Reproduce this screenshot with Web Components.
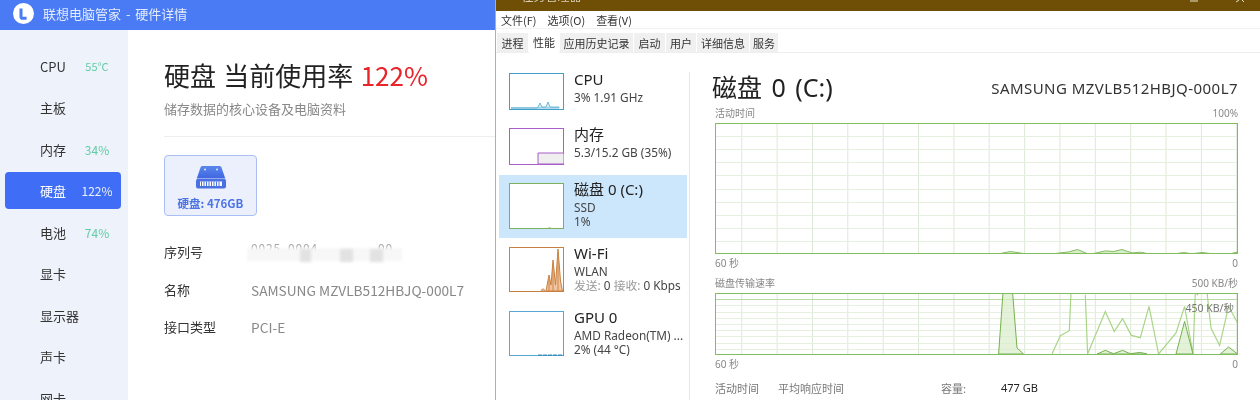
<!DOCTYPE html>
<html lang="zh-CN"><head><meta charset="utf-8"><title>硬件详情</title>
<style>
html,body{margin:0;height:400px;width:1260px;overflow:hidden;background:#fff}
body{font-family:"Noto Sans CJK SC","Noto Sans",sans-serif}
</style></head><body>
<x-desktop>
  <x-lenovo-window>
    <x-nav-item label="CPU" value="55°C"></x-nav-item>
    <x-nav-item label="主板"></x-nav-item>
    <x-nav-item label="内存" value="34%"></x-nav-item>
    <x-nav-item label="硬盘" value="122%" active></x-nav-item>
    <x-nav-item label="电池" value="74%"></x-nav-item>
    <x-nav-item label="显卡"></x-nav-item>
    <x-nav-item label="显示器"></x-nav-item>
    <x-nav-item label="声卡"></x-nav-item>
    <x-nav-item label="网卡"></x-nav-item>
  </x-lenovo-window>
  <x-taskmgr></x-taskmgr>
</x-desktop>
<script>
const def=(n,html,init)=>customElements.define(n,class extends HTMLElement{
  connectedCallback(){ if(this.shadowRoot)return; const r=this.attachShadow({mode:'open'});
    r.innerHTML=typeof html==='function'?html(this):html; init&&init(this,r);} });
const a=(e,k,d='')=>e.getAttribute(k)??d;

def('x-desktop',`<style>:host{display:flex;width:1260px;height:400px;overflow:hidden;filter:blur(.3px)}</style><slot></slot>`);

def('x-lenovo-window',`<style>
:host{display:flex;flex-direction:column;width:495px;height:400px;flex:none;overflow:hidden;background:#fff}
.bar{height:30px;flex:none;background:#4a7bf5;display:flex;align-items:center;color:#e3ebfd;font-size:13px;word-spacing:2px;padding-left:13px;gap:9px;box-sizing:border-box;padding-bottom:4px}
.bar svg{flex:none}
.body{flex:1;display:flex;min-height:0}
.side{width:128px;flex:none;background:#eef2fa;padding:17.5px 7px 0 5px;box-sizing:border-box;display:flex;flex-direction:column;gap:4.5px;overflow:hidden}
.main{flex:1;padding:27px 0 0 36px;min-width:0}
</style>
<div class="bar"><svg width="21" height="21" viewBox="0 0 21 21"><circle cx="10.5" cy="10.5" r="10.5" fill="#fff"/><path d="M8 5.5v8.2q0 1.6 1.6 1.6h4" fill="none" stroke="#4a7bf5" stroke-width="3"/></svg><span>联想电脑管家 - 硬件详情</span></div>
<div class="body"><div class="side"><slot></slot></div><div class="main"><x-disk-detail></x-disk-detail></div></div>`);

def('x-nav-item',e=>`<style>
:host{display:flex;flex:none;height:37px;align-items:center;border-radius:4px;position:relative;font-size:13px;color:#333;${e.hasAttribute('active')?'background:#3f6df5;color:#fff;':''}}
.l{margin-left:35px;width:39px;white-space:nowrap}
.v{width:38px;text-align:center;font-size:${a(e,'value').includes('°')?11:12}px;color:${e.hasAttribute('active')?'#eaf0ff':'#62cda6'};margin-left:-1px;white-space:nowrap}
</style><span class="l">${a(e,'label')}</span><span class="v">${a(e,'value')}</span>`);

def('x-disk-detail',`<style>
:host{display:block}
h1{margin:0;font-weight:400;font-size:26px;line-height:36px;color:#222;white-space:nowrap;word-spacing:1.5px}
h1 b{font-weight:400;color:#e8232a}
p{margin:7px 0 0;font-size:13px;line-height:18px;color:#888}
hr{border:0;border-top:1px solid #eee;margin:18px 0 18px}
.rows{margin-top:25px;display:flex;flex-direction:column;gap:15.5px}
</style>
<h1>硬盘 当前使用率 <b>122%</b></h1><p>储存数据的核心设备及电脑资料</p><hr>
<x-hw-card></x-hw-card>
<div class="rows">
<x-spec-row label="序列号" blur></x-spec-row>
<x-spec-row label="名称" value="SAMSUNG MZVLB512HBJQ-000L7"></x-spec-row>
<x-spec-row label="接口类型" value="PCI-E"></x-spec-row>
</div>`);

def('x-hw-card',`<style>
:host{display:flex;flex-direction:column;align-items:center;box-sizing:border-box;width:93px;height:61px;background:#ebf0fc;border:1px solid #a9bff6;border-radius:4px;color:#4d74e6;font-size:11.5px;font-weight:700;padding-top:10px}
svg{display:block;margin-bottom:5px}
span{line-height:18px;white-space:nowrap}
</style>
<svg width="30" height="23" viewBox="0 0 30 23"><defs><linearGradient id="g" x1="0" y1="0" x2="0" y2="1"><stop offset="0" stop-color="#5b86ee"/><stop offset="1" stop-color="#3f66e0"/></linearGradient></defs>
<path d="M6.5 0h17q1.2 0 1.8 1l4 11.5H.7L4.7 1q.6-1 1.8-1z" fill="url(#g)"/><circle cx="9" cy="3.6" r="1" fill="#dfe7fb"/><circle cx="21" cy="3.6" r="1" fill="#dfe7fb"/>
<path d="M1.5 13h27q1.5 0 1.5 1.5v6q0 2-2 2H2q-2 0-2-2v-6Q0 13 1.5 13z" fill="#4a70e2"/>
<path d="M4 15.5h22v4.5H4z" fill="#fff"/><path d="M5.5 15.5v4.5M8 15.5v4.5M10.5 15.5v4.5M13 15.5v4.5M15.5 15.5v4.5M18 15.5v4.5M20.5 15.5v4.5M23 15.5v4.5" stroke="#4a70e2" stroke-width="1"/></svg>
<span>硬盘: 476GB</span>`);

def('x-spec-row',e=>`<style>
:host{display:flex;font-size:13px;line-height:22px;height:22px;color:#333;white-space:nowrap}
.l{width:87px;flex:none}.v{color:#888;font-size:13.7px}
.s{position:relative;width:150px;height:22px;color:#aaa;font-size:12px;line-height:14px;letter-spacing:.8px}
.s span{position:absolute;top:0}
.s u{position:absolute;top:7px;left:-4px;width:155px;height:13px;background:#f7f7f7;filter:blur(1.5px)}
.s i{position:absolute;top:8px;height:13px;background:#e2e2e2;filter:blur(1.5px)}
</style><span class="l">${a(e,'label')}</span>${e.hasAttribute('blur')?`<span class="s"><span style="left:0">0025</span><span style="left:37px">0004</span><span style="left:127px">00.</span><u></u><i style="left:49px;width:11px"></i><i style="left:89px;width:13px"></i><i style="left:119px;width:13px"></i></span>`:`<span class="v">${a(e,'value')}</span>`}`);

def('x-taskmgr',`<style>
:host{display:flex;flex-direction:column;width:765px;height:400px;flex:none;overflow:hidden;background:#fff;box-sizing:border-box;border-left:1.5px solid #b8b096;font-family:"Noto Sans","Noto Sans CJK SC",sans-serif;color:#222}
.title{height:11px;flex:none;background:#6f4e06;overflow:hidden;position:relative;color:#d9cfb8;font-size:12px;display:flex;margin-left:-1.5px}
.title .in{margin-top:-11px;margin-left:27px;line-height:16px;white-space:nowrap}
.title svg{position:absolute;right:0;top:0}
.menu{height:17px;flex:none;display:flex;gap:11px;padding-left:5px;font-size:11px;line-height:18px;color:#333;font-family:"Noto Sans CJK SC",sans-serif;border-bottom:1px solid #f1f1f1;white-space:nowrap}
.body{flex:1;display:flex;min-height:0}
.list{width:194px;flex:none;box-sizing:border-box;padding:12px 3px 0 3px;display:flex;flex-direction:column;gap:1px;position:relative}
.sep{width:1px;background:#e6e6e6;margin:19px 0 0;flex:none;margin-left:-1px}
</style>
<div class="title"><span class="in">任务管理器</span><svg width="70" height="4"><path d="M0 1h8M46 2l3-2M52 0l2 2" stroke="#e9e1cd" fill="none"/></svg></div>
<div class="menu"><span>文件(F)</span><span>选项(O)</span><span>查看(V)</span></div>
<x-tabs></x-tabs>
<div class="body">
<div class="list">
<x-perf-item kind="cpu" name="CPU" l1="3%  1.91 GHz"></x-perf-item>
<x-perf-item kind="mem" name="内存" l1="5.3/15.2 GB (35%)"></x-perf-item>
<x-perf-item kind="disk" name="磁盘 0 (C:)" l1="SSD" l2="1%" selected></x-perf-item>
<x-perf-item kind="wifi" name="Wi-Fi" l1="WLAN" l2="发送: 0 接收: 0 Kbps"></x-perf-item>
<x-perf-item kind="gpu" name="GPU 0" l1="AMD Radeon(TM) ..." l2="2% (44 °C)"></x-perf-item>
</div><div class="sep"></div>
<x-perf-main></x-perf-main>
</div>`);

def('x-tabs',`<style>
:host{display:flex;height:24px;flex:none;box-sizing:border-box;padding:4px 0 0 1px;border-bottom:1px solid #eee;font-family:"Noto Sans CJK SC",sans-serif;font-size:11px;line-height:20px;color:#333}
span{background:#f0f0f0;text-align:center;margin-right:1px;flex:none;white-space:nowrap}
span.on{background:#fff;margin-top:-2px;line-height:22px;height:22px}
</style>
<span style="width:31px">进程</span><span class="on" style="width:30px">性能</span><span style="width:73px">应用历史记录</span><span style="width:31px">启动</span><span style="width:30px">用户</span><span style="width:52px">详细信息</span><span style="width:28px">服务</span>`);

const pts=(l,ox,oy,ox2=0,oy2=0)=>l.map(p=>`${(ox+p[0]/3-ox2).toFixed(1)},${(oy+p[1]/3-oy2).toFixed(1)}`).join(' ');
const thumbs={
 cpu:[37,'#3f9fc8',`<path d="M0 36h26l1-1 2-4 2 4h2l2 0 2-5 2 5h9v1z" transform="translate(2 -1)" fill="#d9edf5" stroke="#4fa8cf" stroke-width=".8"/>`],
 mem:[37,'#a85fc8',`<path d="M29 36V25h26v11z" fill="#efefef" stroke="#a85fc8"/>`],
 disk:[46,'#7bb05c',`<path d="M39 45l1.5-.8 1.5.8" fill="none" stroke="#8dbd72" stroke-width=".7"/>`],
 wifi:[45,'#c8803f',`<path d="M32 44l1-2 2 0 1 2z" fill="#e9c3a2" stroke="#cc8a55" stroke-width=".7"/><polygon points="37,44 40,28 42,38 44,13 46.5,38 49,2 51.5,34 53.5,44" fill="#efc39f" stroke="#c9803f" stroke-width="1"/><path d="M40 44V30M44 44V16M49 44V6" stroke="#cf8746" stroke-width="1"/>`],
 gpu:[45,'#58a8d4',`<path d="M29 44.2h26" stroke="#3d8fc4" stroke-width="1.4" stroke-dasharray="4 1"/>`]
};
def('x-perf-item',e=>{const t=thumbs[a(e,'kind')];const grey=s=>s.replace(/发送:/,'<span class="g">发送:</span>').replace(/接收:/,'<span class="g">接收:</span>');return `<style>
:host{display:flex;width:188px;box-sizing:border-box;padding:8px 0 9px 10px;font-size:11.8px;line-height:16px;color:#444;${e.hasAttribute('selected')?'background:#cce6fb;':''}flex:none;white-space:nowrap}
svg{flex:none;display:block;background:#fff}
.t{margin:-4px 0 0 10px;font-family:"Noto Sans","Noto Sans CJK SC",sans-serif}
.n{font-size:15px;line-height:20px;color:#222}
.l2{line-height:15px;margin-top:-1px}
.g{color:#999}
</style><svg width="55" height="${t[0]}" viewBox="0 0 55 ${t[0]}"><rect x=".5" y=".5" width="54" height="${t[0]-1}" fill="#fff" stroke="${t[1]}"/>${t[2]}</svg>
<div class="t"><div class="n">${a(e,'name')}</div><div>${a(e,'l1')}</div>${e.hasAttribute('l2')?`<div class="l2">${grey(a(e,'l2'))}</div>`:''}</div>`});

def('x-perf-main',`<style>
:host{display:block;flex:1;min-width:0;padding:16px 22px 0 22px;box-sizing:border-box;font-family:"Noto Sans","Noto Sans CJK SC",sans-serif;overflow:hidden}
.h{display:flex;justify-content:space-between;align-items:center;height:34px;white-space:nowrap}
.h b{font-weight:400;font-size:25px;color:#222;word-spacing:3px}
.h i{font-style:normal;font-size:15px;color:#333;letter-spacing:.45px;margin-top:3px}
.in{padding-left:3px}
.lab{display:flex;justify-content:space-between;font-size:10px;line-height:14px;color:#888;white-space:nowrap}
.stat{display:grid;grid-template-columns:63px 163px 60px 1fr;font-size:11px;line-height:14px;color:#777;margin-top:10px;white-space:nowrap;font-family:"Noto Sans CJK SC",sans-serif}
.stat em{font-style:normal;color:#222;font-family:"Noto Sans",sans-serif}
.v{grid-column:2;color:#222;font-size:11.5px;line-height:16px;padding-left:39px;margin-top:3px}
</style>
<div class="h"><b>磁盘 0 (C:)</b><i>SAMSUNG MZVLB512HBJQ-000L7</i></div>
<div class="in">
<div class="lab" style="margin-top:3px"><span>活动时间</span><span>100%</span></div>
<x-graph style="margin-top:3px" h="131" kind="a"></x-graph>
<div class="lab" style="margin-top:2px"><span>60 秒</span><span>0</span></div>
<div class="lab" style="margin-top:6px"><span>磁盘传输速率</span><span>500 KB/秒</span></div>
<x-graph style="margin-top:3px" h="62" kind="b"></x-graph>
<div class="lab" style="margin-top:2px"><span>60 秒</span><span>0</span></div>
<div class="stat"><span>活动时间</span><span>平均响应时间</span><span>容量:</span><em>477 GB</em><span class="v">毫秒</span></div>
</div>`);

def('x-graph',e=>{
 const W=523,h=+a(e,'h'),b=a(e,'kind')==='b',X=714.7,Y=b?293.3:122.8;
 let g='';
 for(let x=741.5-X;x<W;x+=35.35) g+=`<path d="M${x.toFixed(1)} 0V${h}" stroke="#dde9d6"/>`;
 const rows=10; for(let i=1;i<rows;i++){const y=Math.round(h/rows*i)+.5; g+=`<path d="M0 ${y}H${W}" stroke="#e6f0df"/>`;}
 const P=l=>pts(l,980,230,X,Y);
 let s='';
 if(b){
  s+=`<path d="M0 6.5H${W}" stroke="#b7d9a2"/>`;
  const light=[[[215,373],[240,318],[267,303],[272,188]],[[315,195],[322,373],[375,245],[402,305],[427,267],[453,317],[480,324],[506,230],[535,373],[587,310],[613,230],[638,373],[645,188],[652,195],[654,188]],[[680,188],[692,295],[718,347],[745,230],[772,280]]];
  light.forEach(l=>s+=`<polyline points="${P(l)}" fill="none" stroke="#aad588" stroke-width="1.2"/>`);
  const dark=[[[55,373],[68,188],[97,188],[110,355],[130,373]],[[350,373],[375,362],[400,372],[427,362],[450,372],[480,368],[500,373]],[[587,373],[613,275],[638,373]],[[720,373],[745,352],[772,373]]];
  dark.forEach(l=>s+=`<polygon points="${P(l)}" fill="#d8edc9" fill-opacity=".7" stroke="#76b050" stroke-width="1"/>`);
 } else {
  const dark=[[[60,70],[90,64],[130,70]],[[225,70],[265,65],[292,58],[320,70]],[[340,70],[375,62],[400,64],[425,58],[455,68],[480,66],[500,70]],[[590,70],[610,67],[630,70]],[[640,70],[665,67],[690,70]],[[755,70],[772,66]]];
  dark.forEach(l=>s+=`<polygon points="${P(l)}" fill="#d8edc9" stroke="#84bb60" stroke-width="1"/>`);
 }
 return `<style>:host{display:block;position:relative;height:${h}px;width:${W}px}svg{display:block}
 span{position:absolute;right:4px;top:7px;font-size:10.5px;line-height:16px;color:#777;white-space:nowrap}</style>
 <svg width="${W}" height="${h}">${g}${s}<rect x=".5" y=".5" width="${W-1}" height="${h-1}" fill="none" stroke="#82bd5e"/></svg>${b?'<span>450 KB/秒</span>':''}`;
});
</script>
</body></html>
